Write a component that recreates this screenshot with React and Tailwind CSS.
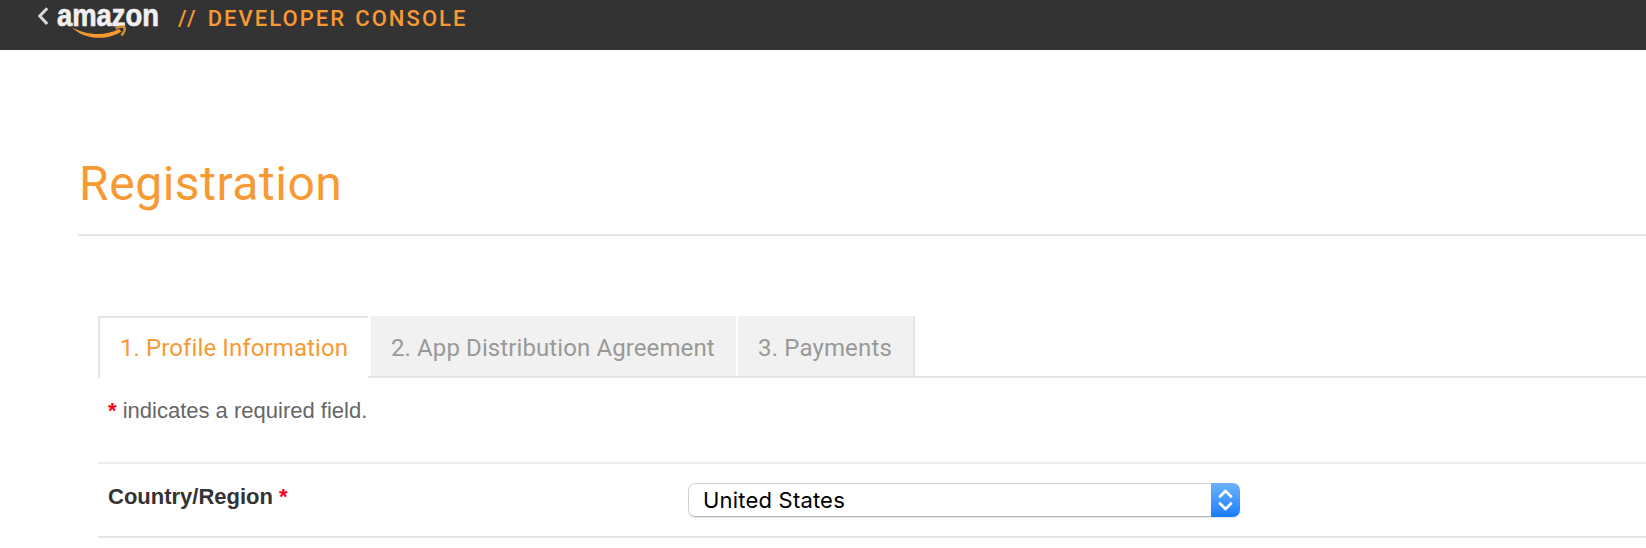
const tabBase = "flex h-[60px] items-center whitespace-nowrap font-['Roboto',sans-serif] text-2xl leading-none";

function Logo() {
  return (
    <svg className="block shrink-0 overflow-visible" width="124" height="40" viewBox="36 0 124 40" role="img" aria-label="amazon">
      <path d="M47.200 8.300 39.800 16l7.400 8" fill="none" stroke="#d8d8d8" strokeWidth="3" />
      <text x="57" y="25.700" textLength="102" lengthAdjust="spacingAndGlyphs" fill="#f0f0f0" stroke="#f0f0f0" strokeWidth="0.7" fontFamily="'Liberation Sans', sans-serif" fontWeight="700" fontSize="31">
        amazon
      </text>
      <path d="M71.500 27C86 35.500 105 36.500 119 29L121.500 31.500C107 41 84 40 71.500 27Z" fill="#f69931" />
      <path d="M115.500 28.200C119.500 26.600 123.500 26.200 124.600 27.800C125.400 30 123.500 33 121.500 35.500" fill="none" stroke="#d98a36" strokeWidth="2.600" />
    </svg>
  );
}

function Required() {
  return <span className="font-bold text-[#ff0018]">*</span>;
}

export default function App() {
  return (
    <div className="h-[548px] overflow-hidden bg-white font-['Liberation_Sans',sans-serif] text-[22px]">
      <header className="flex h-[50px] items-start bg-[#333333] pl-9">
        <Logo />
        <div className="ml-[18px] pt-[6px] whitespace-pre font-['Roboto',sans-serif] text-[22px] leading-[26px] font-medium tracking-[2.05px] [word-spacing:1.5px] text-[#f89a33]">
          <span className="tracking-[3px]">{"//"}</span>
          {" DEVELOPER CONSOLE"}
        </div>
      </header>

      <main className="pl-[78px]">
        <h1 className="h-[186px] border-b-2 border-[#e6e6e6] pt-[106px] pl-px font-['Roboto',sans-serif] text-[48px] leading-[56px] font-normal tracking-[0.55px] text-[#f89a33]">
          Registration
        </h1>

        <div className="pt-20 pl-5">
          <nav className="flex h-[62px]">
            <div className="w-[270px] border-t-2 border-l-2 border-[#e6e6e6]">
              <div className={tabBase + " pl-[20px] tracking-[0.1px] text-[#f89a33]"}>1. Profile Information</div>
            </div>
            <div className="flex flex-1 border-b-2 border-[#e6e6e6] pl-[3px]">
              <div className={tabBase + " mr-0.5 w-[365px] bg-[#f1f1f1] pt-1 pl-5 tracking-[0.1px] text-[#999999]"}>2. App Distribution Agreement</div>
              <div className={tabBase + " w-[177px] border-r-2 border-[#e6e6e6] bg-[#f1f1f1] pt-1 pl-5 tracking-[0.15px] text-[#999999]"}>3. Payments</div>
            </div>
          </nav>

          <p className="h-[84px] pt-5 pl-[10px] leading-[26px] text-[#666666]">
            <Required /> indicates a required field.
          </p>

          <div className="flex h-[76px] border-y-2 border-t-[#eeeeee] border-b-[#e6e6e6] pl-[10px]">
            <label className="w-[580px] pt-5 leading-[26px] font-bold text-[#333333]">
              Country/Region <Required />
            </label>
            <button className="mt-[19px] flex h-[34px] w-[552px] overflow-hidden rounded-[7px] bg-white text-left shadow-[0_1px_1px_rgba(0,0,0,0.12)]">
              <span className="h-[34px] flex-1 rounded-l-[7px] border border-r-0 border-[#cfcfcf] border-b-[#b5b5b5] pt-[3px] pl-[14px] font-['Inter',sans-serif] text-[22px] leading-[26px] tracking-[0.2px] text-black">United States</span>
              <span className="flex h-[34px] w-[29px] items-center justify-center bg-linear-to-b from-[#6bb3fa] to-[#167cfb]">
                <svg width="29" height="34" viewBox="0 0 29 34" fill="none" stroke="white" strokeWidth="2.600" strokeLinecap="round" strokeLinejoin="round">
                  <path d="M9 13.500 14.500 8 20 13.500M9 20.500l5.500 5.500 5.500-5.500" />
                </svg>
              </span>
            </button>
          </div>
        </div>
      </main>
    </div>
  );
}
